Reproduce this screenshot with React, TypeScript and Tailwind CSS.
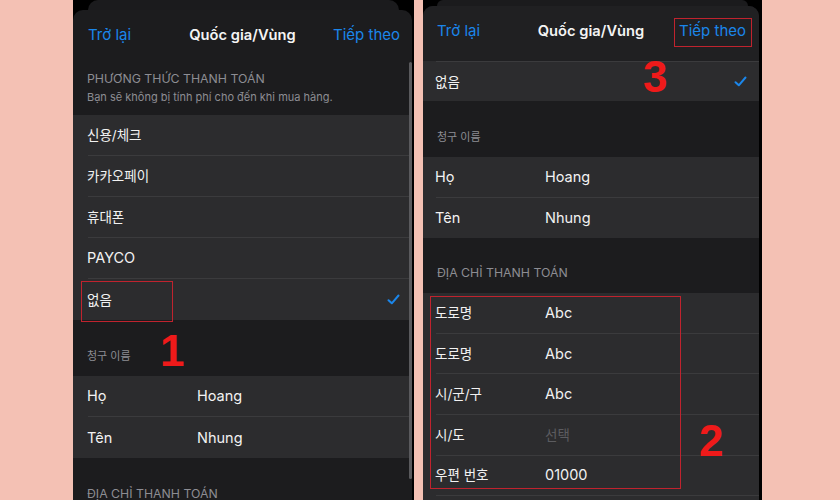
import React from "react";

const FONT = "font-['Inter','Noto_Sans_CJK_KR',sans-serif]";

function Check() {
  return (
    <svg width="13" height="11" viewBox="0 0 13 11" fill="none">
      <path d="M1.5 6.2 L4.8 9.3 L11.5 1.5" stroke="#1b86ea" strokeWidth="2" strokeLinecap="round" strokeLinejoin="round" />
    </svg>
  );
}

function Ko({ children, className = "" }: { children: React.ReactNode; className?: string }) {
  return <span className={`text-[13.5px] ${className}`}>{children}</span>;
}

type RowProps = {
  label: React.ReactNode;
  value?: React.ReactNode;
  check?: boolean;
  sep?: boolean;
  topSep?: boolean;
  labelW: string;
  inset: string;
  placeholder?: boolean;
  h?: string;
};

function Row({ label, value, check, sep = true, topSep, labelW, inset, placeholder, h = "h-[41px]" }: RowProps) {
  return (
    <div className={`flex ${h} bg-[#2c2c2e] ${inset}`}>
      <div
        className={`flex flex-1 items-center pr-[12px] ${sep ? "border-b border-[#3b3b3d]" : ""} ${topSep ? "border-t border-[#3b3b3d]" : ""}`}
      >
        <div className={`${labelW} -ml-px text-[14.5px] text-[#f2f2f2]`}>{label}</div>
        {value !== undefined && (
          <div className={`flex-1 text-[14.5px] ${placeholder ? "text-[#5c5c60]" : "text-[#f2f2f2]"}`}>{value}</div>
        )}
        {value === undefined && <div className="flex-1" />}
        {check && <Check />}
      </div>
    </div>
  );
}

function SectionGap({ children, inset, h = "h-[56px]" }: { children: React.ReactNode; inset: string; h?: string }) {
  return (
    <div className={`flex ${h} items-end pb-[12px] ${inset} text-[12.3px] uppercase leading-[16px] text-[#8d8d93]`}>
      {children}
    </div>
  );
}

function Nav({ h, left, right }: { h: string; left: string; right: string }) {
  return (
    <div className={`grid ${h} grid-cols-[1fr_auto_1fr] items-center`}>
      <div className={`${left} text-[15px] text-[#1b86ea]`}>Trở lại</div>
      <div className="text-[14.7px] font-semibold text-[#f4f4f4]">Quốc gia/Vùng</div>
      <div className={`text-right text-[15px] text-[#1b86ea] ${right}`}>Tiếp theo</div>
    </div>
  );
}

function Num({ n, className }: { n: string; className: string }) {
  return (
    <div className={`absolute font-['Liberation_Sans',sans-serif] text-[44px] font-bold leading-none text-[#ef1a1a] ${className}`}>
      {n}
    </div>
  );
}

export default function App() {
  return (
    <div className={`flex h-[500px] w-[840px] overflow-hidden bg-[#f4c1b4] ${FONT}`}>
      {/* Left phone */}
      <div className="relative ml-[73px] flex h-full w-[341px] flex-col bg-black">
        <div className="h-[10px] px-[15px]">
          <div className="h-full rounded-t-[10px] bg-[#1b1b1d]" />
        </div>
        <div className="w-[339px] flex-1 overflow-hidden rounded-t-[10px] bg-[#1c1c1e]">
          <Nav h="h-[50px]" left="pl-[15px]" right="pr-[12px]" />
          <div className="px-[14px] pt-[11px] pb-[11px]">
            <div className="text-[12.3px] leading-[16px] text-[#8d8d93]">PHƯƠNG THỨC THANH TOÁN</div>
            <div className="mt-[3px] text-[11px] leading-[14px] text-[#8d8d93]">
              Bạn sẽ không bị tính phí cho đến khi mua hàng.
            </div>
          </div>
          <Row label={<Ko>신용/체크</Ko>} labelW="w-[110px]" inset="pl-[15px]" />
          <Row label={<Ko>카카오페이</Ko>} labelW="w-[110px]" inset="pl-[15px]" />
          <Row label={<Ko>휴대폰</Ko>} labelW="w-[110px]" inset="pl-[15px]" />
          <Row label="PAYCO" labelW="w-[110px]" inset="pl-[15px]" />
          <Row label={<Ko>없음</Ko>} check sep={false} labelW="w-[110px]" inset="pl-[15px]" />
          <SectionGap inset="px-[14px]">
            <Ko className="!text-[11px]">청구 이름</Ko>
          </SectionGap>
          <Row label="Họ" value="Hoang" labelW="w-[110px]" inset="pl-[15px]" />
          <Row label="Tên" value="Nhung" sep={false} labelW="w-[110px]" inset="pl-[15px]" />
          <SectionGap inset="px-[14px]">ĐỊA CHỈ THANH TOÁN</SectionGap>
        </div>
        {/* scroll indicator */}
        <div className="absolute left-[336px] top-[62px] h-[417px] w-[3px] rounded-full bg-[#5a5a5d]" />
        {/* annotations */}
        <div className="absolute left-[8px] top-[281px] h-[41px] w-[92px] border border-[#c0232e]" />
        <Num n="1" className="left-[87px] top-[329px]" />
      </div>

      {/* Right phone */}
      <div className="relative ml-[9px] flex h-full w-[339px] flex-col bg-black">
        <div className="h-[6px] px-[14px]">
          <div className="h-full rounded-t-[10px] bg-[#1b1b1d]" />
        </div>
        <div className="w-[336px] flex-1 overflow-hidden rounded-t-[10px] bg-[#1c1c1e]">
          <div className="bg-[#202022] pb-[5px]">
            <Nav h="h-[50px]" left="pl-[14px]" right="pr-[13px]" />
          </div>
          <Row label={<Ko>없음</Ko>} check sep={false} topSep h="h-[40px]" labelW="w-[110px]" inset="pl-[13px]" />
          <SectionGap inset="px-[14px]">
            <Ko className="!text-[11px]">청구 이름</Ko>
          </SectionGap>
          <Row label="Họ" value="Hoang" h="h-[40.6px]" labelW="w-[110px]" inset="pl-[13px]" />
          <Row label="Tên" value="Nhung" h="h-[40.6px]" sep={false} labelW="w-[110px]" inset="pl-[13px]" />
          <SectionGap inset="px-[14px]" h="h-[55px]">ĐỊA CHỈ THANH TOÁN</SectionGap>
          <Row label={<Ko>도로명</Ko>} value="Abc" h="h-[40.6px]" labelW="w-[110px]" inset="pl-[13px]" />
          <Row label={<Ko>도로명</Ko>} value="Abc" h="h-[40.6px]" labelW="w-[110px]" inset="pl-[13px]" />
          <Row label={<Ko>시/군/구</Ko>} value="Abc" h="h-[40.6px]" labelW="w-[110px]" inset="pl-[13px]" />
          <Row label={<Ko>시/도</Ko>} value={<Ko>선택</Ko>} placeholder h="h-[40.6px]" labelW="w-[110px]" inset="pl-[13px]" />
          <Row label={<Ko>우편 번호</Ko>} value="01000" h="h-[40.6px]" labelW="w-[110px]" inset="pl-[13px]" />
          <Row label="" labelW="w-[110px]" inset="pl-[13px]" />
        </div>
        {/* annotations */}
        <div className="absolute left-[251px] top-[18px] h-[29px] w-[78px] border border-[#c0232e]" />
        <div className="absolute left-[7px] top-[296px] h-[193px] w-[251px] border border-[#c0232e]" />
        <Num n="3" className="left-[220px] top-[55px]" />
        <Num n="2" className="left-[276px] top-[419px]" />
      </div>
    </div>
  );
}
